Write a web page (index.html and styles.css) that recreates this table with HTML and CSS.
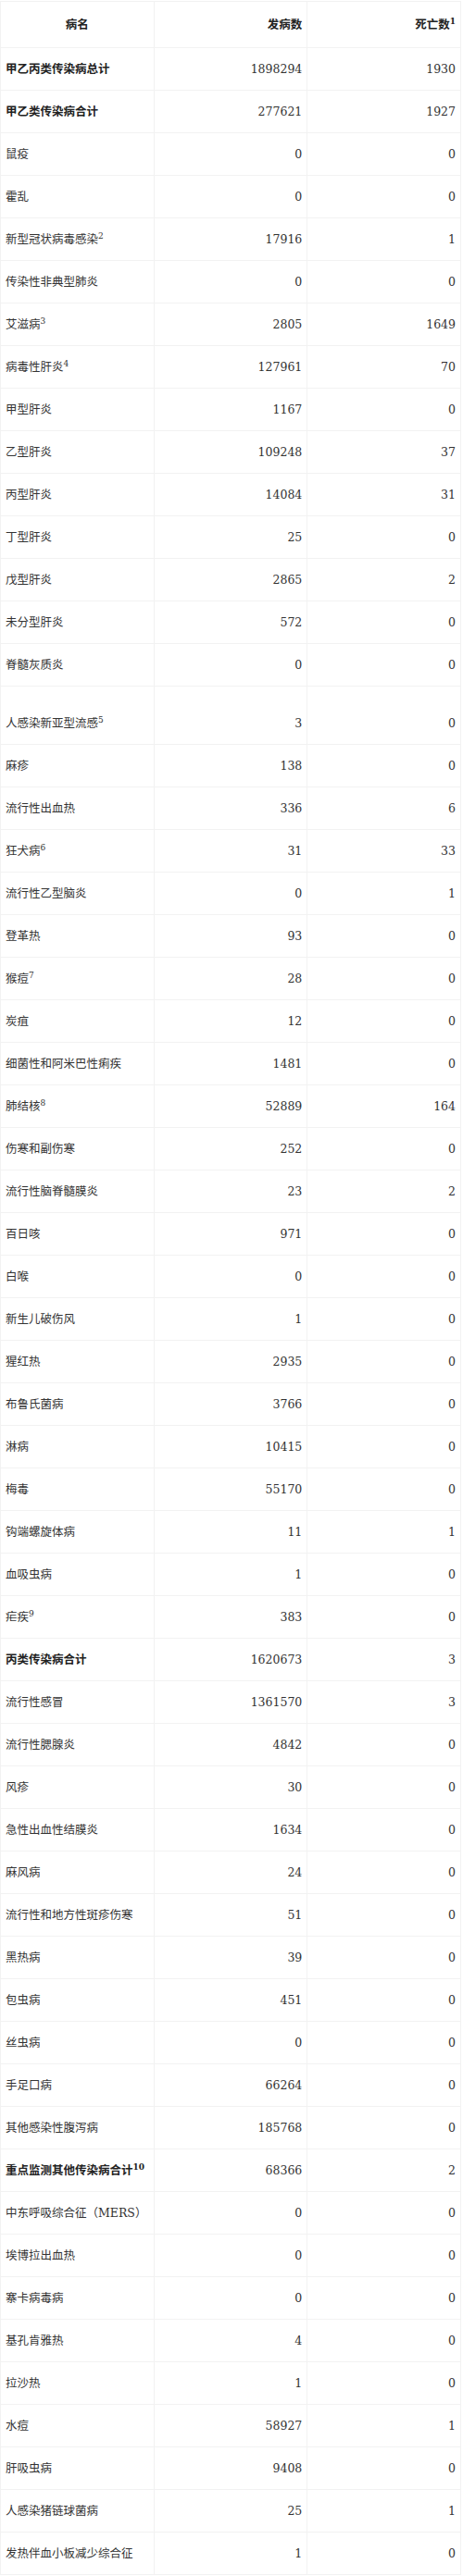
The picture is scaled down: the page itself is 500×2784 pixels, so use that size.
FILE: index.html
```html
<!DOCTYPE html>
<html lang="zh-CN">
<head>
<meta charset="utf-8">
<title>传染病统计</title>
<link rel="stylesheet" href="styles.css">
</head>
<body>
<table class="stats">
<thead>
<tr><th class="name-h">病名</th><th class="num">发病数</th><th class="num">死亡数<sup>1</sup></th></tr>
</thead>
<tbody>
<tr class="total"><td>甲乙丙类传染病总计</td><td class="num">1898294</td><td class="num">1930</td></tr>
<tr class="total"><td>甲乙类传染病合计</td><td class="num">277621</td><td class="num">1927</td></tr>
<tr><td>鼠疫</td><td class="num">0</td><td class="num">0</td></tr>
<tr><td>霍乱</td><td class="num">0</td><td class="num">0</td></tr>
<tr><td>新型冠状病毒感染<sup>2</sup></td><td class="num">17916</td><td class="num">1</td></tr>
<tr><td>传染性非典型肺炎</td><td class="num">0</td><td class="num">0</td></tr>
<tr><td>艾滋病<sup>3</sup></td><td class="num">2805</td><td class="num">1649</td></tr>
<tr><td>病毒性肝炎<sup>4</sup></td><td class="num">127961</td><td class="num">70</td></tr>
<tr><td>甲型肝炎</td><td class="num">1167</td><td class="num">0</td></tr>
<tr><td>乙型肝炎</td><td class="num">109248</td><td class="num">37</td></tr>
<tr><td>丙型肝炎</td><td class="num">14084</td><td class="num">31</td></tr>
<tr><td>丁型肝炎</td><td class="num">25</td><td class="num">0</td></tr>
<tr><td>戊型肝炎</td><td class="num">2865</td><td class="num">2</td></tr>
<tr><td>未分型肝炎</td><td class="num">572</td><td class="num">0</td></tr>
<tr><td>脊髓灰质炎</td><td class="num">0</td><td class="num">0</td></tr>
<tr class="tall"><td>人感染新亚型流感<sup>5</sup></td><td class="num">3</td><td class="num">0</td></tr>
<tr><td>麻疹</td><td class="num">138</td><td class="num">0</td></tr>
<tr><td>流行性出血热</td><td class="num">336</td><td class="num">6</td></tr>
<tr><td>狂犬病<sup>6</sup></td><td class="num">31</td><td class="num">33</td></tr>
<tr><td>流行性乙型脑炎</td><td class="num">0</td><td class="num">1</td></tr>
<tr><td>登革热</td><td class="num">93</td><td class="num">0</td></tr>
<tr><td>猴痘<sup>7</sup></td><td class="num">28</td><td class="num">0</td></tr>
<tr><td>炭疽</td><td class="num">12</td><td class="num">0</td></tr>
<tr><td>细菌性和阿米巴性痢疾</td><td class="num">1481</td><td class="num">0</td></tr>
<tr><td>肺结核<sup>8</sup></td><td class="num">52889</td><td class="num">164</td></tr>
<tr><td>伤寒和副伤寒</td><td class="num">252</td><td class="num">0</td></tr>
<tr><td>流行性脑脊髓膜炎</td><td class="num">23</td><td class="num">2</td></tr>
<tr><td>百日咳</td><td class="num">971</td><td class="num">0</td></tr>
<tr><td>白喉</td><td class="num">0</td><td class="num">0</td></tr>
<tr><td>新生儿破伤风</td><td class="num">1</td><td class="num">0</td></tr>
<tr><td>猩红热</td><td class="num">2935</td><td class="num">0</td></tr>
<tr><td>布鲁氏菌病</td><td class="num">3766</td><td class="num">0</td></tr>
<tr><td>淋病</td><td class="num">10415</td><td class="num">0</td></tr>
<tr><td>梅毒</td><td class="num">55170</td><td class="num">0</td></tr>
<tr><td>钩端螺旋体病</td><td class="num">11</td><td class="num">1</td></tr>
<tr><td>血吸虫病</td><td class="num">1</td><td class="num">0</td></tr>
<tr><td>疟疾<sup>9</sup></td><td class="num">383</td><td class="num">0</td></tr>
<tr class="total"><td>丙类传染病合计</td><td class="num">1620673</td><td class="num">3</td></tr>
<tr><td>流行性感冒</td><td class="num">1361570</td><td class="num">3</td></tr>
<tr><td>流行性腮腺炎</td><td class="num">4842</td><td class="num">0</td></tr>
<tr><td>风疹</td><td class="num">30</td><td class="num">0</td></tr>
<tr><td>急性出血性结膜炎</td><td class="num">1634</td><td class="num">0</td></tr>
<tr><td>麻风病</td><td class="num">24</td><td class="num">0</td></tr>
<tr><td>流行性和地方性斑疹伤寒</td><td class="num">51</td><td class="num">0</td></tr>
<tr><td>黑热病</td><td class="num">39</td><td class="num">0</td></tr>
<tr><td>包虫病</td><td class="num">451</td><td class="num">0</td></tr>
<tr><td>丝虫病</td><td class="num">0</td><td class="num">0</td></tr>
<tr><td>手足口病</td><td class="num">66264</td><td class="num">0</td></tr>
<tr><td>其他感染性腹泻病</td><td class="num">185768</td><td class="num">0</td></tr>
<tr class="total"><td>重点监测其他传染病合计<sup>10</sup></td><td class="num">68366</td><td class="num">2</td></tr>
<tr><td>中东呼吸综合征（MERS）</td><td class="num">0</td><td class="num">0</td></tr>
<tr><td>埃博拉出血热</td><td class="num">0</td><td class="num">0</td></tr>
<tr><td>寨卡病毒病</td><td class="num">0</td><td class="num">0</td></tr>
<tr><td>基孔肯雅热</td><td class="num">4</td><td class="num">0</td></tr>
<tr><td>拉沙热</td><td class="num">1</td><td class="num">0</td></tr>
<tr><td>水痘</td><td class="num">58927</td><td class="num">1</td></tr>
<tr><td>肝吸虫病</td><td class="num">9408</td><td class="num">0</td></tr>
<tr><td>人感染猪链球菌病</td><td class="num">25</td><td class="num">1</td></tr>
<tr><td>发热伴血小板减少综合征</td><td class="num">1</td><td class="num">0</td></tr>
</tbody>
</table>
</body>
</html>
```

FILE: styles.css
```css
html, body {
  margin: 0;
  padding: 0;
  background: #ffffff;
}

body {
  font-family: "DejaVu Serif", "Noto Sans CJK SC", serif;
  font-size: 12.5px;
  color: #333333;
}

.stats {
  width: 498px;
  margin: 1px 0 0 0;
  border-collapse: collapse;
  table-layout: fixed;
  border: 1px solid #f4f4f4;
}

.stats th,
.stats td {
  width: 33.333%;
  padding: 14px 5px 13px 5px;
  line-height: 18px;
  border: 1px solid #f2f2f2;
  text-align: left;
  vertical-align: middle;
  font-weight: normal;
}

.stats thead th {
  padding-top: 16px;
  padding-bottom: 15px;
  font-weight: bold;
  color: #222222;
}

.stats th.name-h {
  text-align: center;
}

.stats .num {
  text-align: right;
}

.stats tr.total td {
  font-weight: bold;
  color: #222222;
}

.stats tr.total td.num {
  font-weight: normal;
  color: #333333;
}

.stats tr.tall td {
  padding-top: 31px;
}

.stats sup {
  font-size: 0.72em;
  line-height: 0;
  vertical-align: 0.55em;
}
```
